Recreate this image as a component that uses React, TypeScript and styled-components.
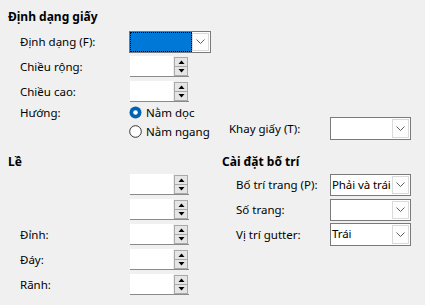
import * as React from "react";
import styled, { createGlobalStyle } from "styled-components";

const GlobalStyle = createGlobalStyle`
  html, body {
    margin: 0;
    padding: 0;
    background: #f0f0f0;
  }
  body {
    font-family: "Noto Sans", "Liberation Sans", sans-serif;
    font-size: 11.5px;
    color: #000;
  }
`;

const Page = styled.div`
  width: 425px;
  height: 305px;
  box-sizing: border-box;
  padding: 9px 0 0 8px;
  overflow: hidden;
`;

const SectionTitle = styled.div<{ $top?: number }>`
  font-weight: 700;
  font-size: 12px;
  height: 16px;
  line-height: 16px;
  margin-top: ${(p) => p.$top || 0}px;
  white-space: nowrap;
`;

const Rows = styled.div<{ $top?: number }>`
  display: flex;
  flex-direction: column;
  margin-top: ${(p) => p.$top || 0}px;
`;

const Row = styled.div<{ $h?: number }>`
  display: flex;
  align-items: center;
  height: ${(p) => p.$h || 25}px;
`;

const Label = styled.div<{ $indent: number; $width: number }>`
  box-sizing: border-box;
  padding-left: ${(p) => p.$indent}px;
  width: ${(p) => p.$width}px;
  flex: none;
  white-space: nowrap;
`;

/* ---------- combo box ---------- */

const ComboBox = styled.div<{ $w: number; $h?: number }>`
  box-sizing: border-box;
  display: flex;
  width: ${(p) => p.$w}px;
  height: ${(p) => p.$h || 22}px;
  border: 1px solid #7a7a7a;
  background: #fff;
  flex: none;
`;

const ComboText = styled.div<{ $focused?: boolean }>`
  flex: 1;
  min-width: 0;
  box-sizing: border-box;
  padding-left: 1px;
  line-height: 20px;
  white-space: nowrap;
  overflow: hidden;
  letter-spacing: -0.1px;
  background: ${(p) => (p.$focused ? "#0078d7" : "#fff")};
  outline: ${(p) => (p.$focused ? "1px dotted #000" : "none")};
  outline-offset: -1px;
`;

const DropButton = styled.div`
  box-sizing: border-box;
  width: 17px;
  flex: none;
  margin: 1px 1px 1px 0;
  border: 1px solid #dadada;
  background: #fdfdfd;
  display: flex;
  align-items: center;
  justify-content: center;
`;

const Chevron = () => (
  <svg width="9" height="5" viewBox="0 0 9 5">
    <path d="M0.5 0.5 L4.5 4.5 L8.5 0.5" fill="none" stroke="#5f5f5f" strokeWidth="1" />
  </svg>
);

const Combo = ({ w, h, text, focused }: { w: number; h?: number; text?: string; focused?: boolean }) => (
  <ComboBox $w={w} $h={h}>
    <ComboText $focused={focused}>{text}</ComboText>
    <DropButton>
      <Chevron />
    </DropButton>
  </ComboBox>
);

/* ---------- spin field ---------- */

const SpinBox = styled.div`
  box-sizing: border-box;
  display: flex;
  width: 59px;
  height: 21px;
  background: #fff;
  border-bottom: 1px solid #8a8a8a;
  flex: none;
`;

const SpinInput = styled.div`
  flex: 1;
`;

const SpinButtons = styled.div`
  width: 16px;
  background: #f0f0f0;
  display: flex;
  flex-direction: column;
  padding: 1px 1px 0 1px;
  box-sizing: border-box;
`;

const SpinButton = styled.div`
  flex: 1;
  box-sizing: border-box;
  border: 1px solid #a9a9a9;
  background: #e5e5e5;
  display: flex;
  align-items: center;
  justify-content: center;
  & + & {
    border-top: none;
  }
`;

const Arrow = ({ up }: { up?: boolean }) => (
  <svg width="7" height="4" viewBox="0 0 7 4">
    <path d={up ? "M0.5 4 L3.5 0.5 L6.5 4 Z" : "M0.5 0 L3.5 3.5 L6.5 0 Z"} fill="#000" />
  </svg>
);

const Spin = () => (
  <SpinBox>
    <SpinInput />
    <SpinButtons>
      <SpinButton>
        <Arrow up />
      </SpinButton>
      <SpinButton>
        <Arrow />
      </SpinButton>
    </SpinButtons>
  </SpinBox>
);

/* ---------- radio ---------- */

const RadioGroup = styled.div`
  display: flex;
  flex-direction: column;
  width: 100px;
  flex: none;
`;

const RadioItem = styled.label`
  display: flex;
  align-items: center;
  height: 19px;
  gap: 4px;
  white-space: nowrap;
`;

const RadioMark = ({ checked }: { checked?: boolean }) => (
  <svg width="13" height="13" viewBox="0 0 13 13">
    {checked ? (
      <>
        <circle cx="6.5" cy="6.5" r="6" fill="#0063b1" />
        <circle cx="6.5" cy="6.5" r="2.3" fill="#fff" />
      </>
    ) : (
      <circle cx="6.5" cy="6.5" r="5.8" fill="#fff" stroke="#333" strokeWidth="1" />
    )}
  </svg>
);

const Radio = ({ checked, children }: { checked?: boolean; children: React.ReactNode }) => (
  <RadioItem>
    <RadioMark checked={checked} />
    <span>{children}</span>
  </RadioItem>
);

/* ---------- layout pieces ---------- */

const OrientationRow = styled.div`
  display: flex;
  align-items: flex-start;
`;

const TrayGroup = styled.div`
  display: flex;
  align-items: center;
  align-self: flex-end;
  margin-bottom: 1px;
`;

const Columns = styled.div`
  display: flex;
`;

const Column = styled.div<{ $w: number }>`
  width: ${(p) => p.$w}px;
  flex: none;
`;

const Spacer = styled.div<{ $w: number }>`
  width: ${(p) => p.$w}px;
  flex: none;
`;

export default function App() {
  return (
    <Page>
      <GlobalStyle />
      <SectionTitle>Định dạng giấy</SectionTitle>
      <Rows $top={4}>
        <Row>
          <Label $indent={12} $width={121}>Định dạng (F):</Label>
          <Combo w={82} focused />
        </Row>
        <Row>
          <Label $indent={12} $width={122}>Chiều rộng:</Label>
          <Spin />
        </Row>
        <Row $h={24}>
          <Label $indent={12} $width={122}>Chiều cao:</Label>
          <Spin />
        </Row>
        <OrientationRow>
          <Row $h={19}>
            <Label $indent={12} $width={121}>Hướng:</Label>
          </Row>
          <RadioGroup>
            <Radio checked>Nằm dọc</Radio>
            <Radio>Nằm ngang</Radio>
          </RadioGroup>
          <TrayGroup>
            <Label $indent={0} $width={101}>Khay giấy (T):</Label>
            <Combo w={81} h={23} />
          </TrayGroup>
        </OrientationRow>
      </Rows>
      <Columns>
        <Column $w={214}>
          <SectionTitle $top={13}>Lề</SectionTitle>
          <Rows $top={2}>
            <Row>
              <Spacer $w={122} />
              <Spin />
            </Row>
            <Row>
              <Spacer $w={122} />
              <Spin />
            </Row>
            <Row>
              <Label $indent={12} $width={122}>Đỉnh:</Label>
              <Spin />
            </Row>
            <Row>
              <Label $indent={12} $width={122}>Đáy:</Label>
              <Spin />
            </Row>
            <Row>
              <Label $indent={12} $width={122}>Rãnh:</Label>
              <Spin />
            </Row>
          </Rows>
        </Column>
        <Column $w={200}>
          <SectionTitle $top={13}>Cài đặt bố trí</SectionTitle>
          <Rows $top={2}>
            <Row>
              <Label $indent={14} $width={108}>Bố trí trang (P):</Label>
              <Combo w={81} text="Phải và trái" />
            </Row>
            <Row>
              <Label $indent={14} $width={108}>Số trang:</Label>
              <Combo w={81} />
            </Row>
            <Row>
              <Label $indent={14} $width={108}>Vị trí gutter:</Label>
              <Combo w={81} h={23} text="Trái" />
            </Row>
          </Rows>
        </Column>
      </Columns>
    </Page>
  );
}
